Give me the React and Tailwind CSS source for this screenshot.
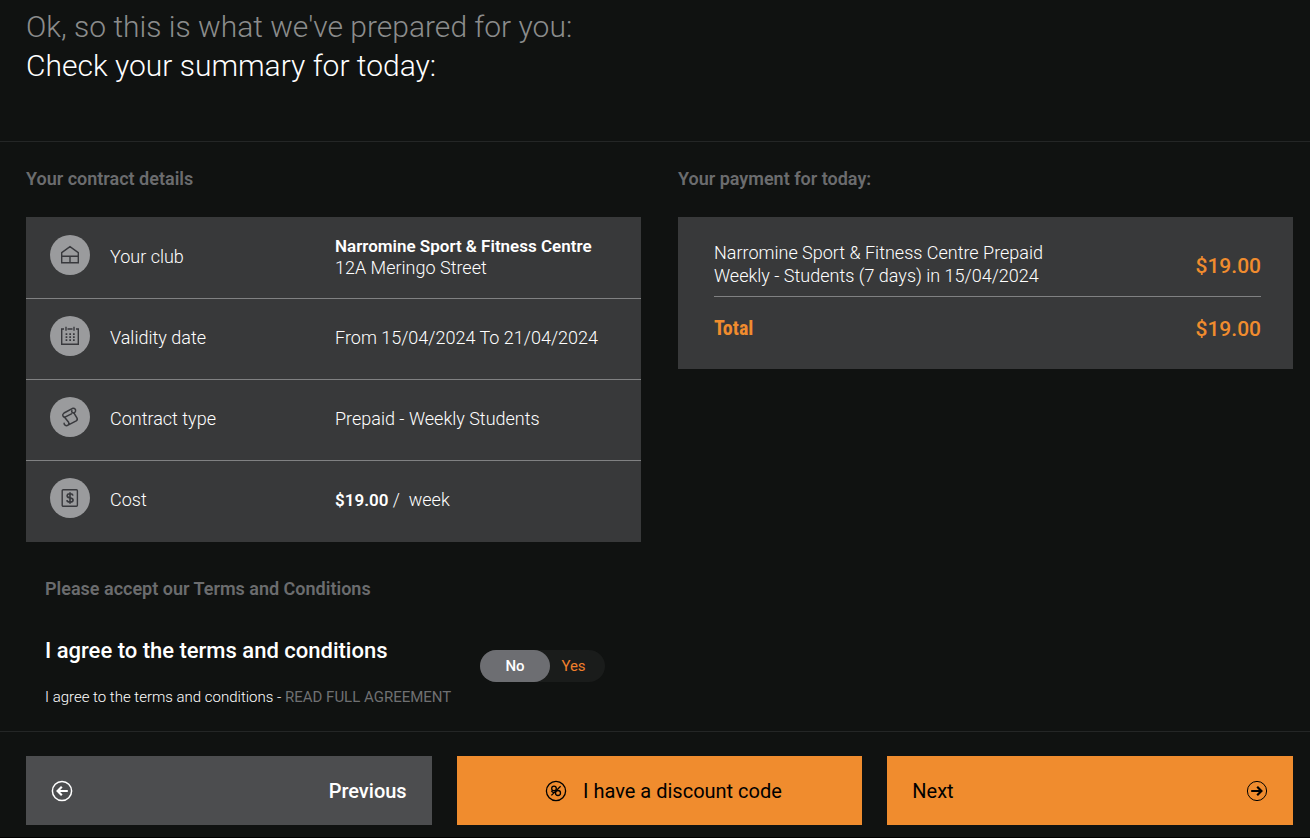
import React, { useState } from "react";

const ClubIcon = () => (
  <svg width="20" height="20" viewBox="0 0 20 20" fill="none" stroke="currentColor" strokeWidth="1.4">
    <path d="M1.7 7.6 10 1.6l8.3 6v10.2H1.7zM1.7 11.2h16.6M10 11.2v6.6" />
  </svg>
);

const DateIcon = () => (
  <svg width="20" height="20" viewBox="0 0 20 20" fill="none" stroke="currentColor" strokeWidth="1.4">
    <path d="M4 3H1.7v15.3h16.6V3H16M7.5 3h5M6 .8v4M14 .8v4" />
    <path d="M5.6 8.2h9.4M5.6 11.2h9.4M5.6 14.2h9.4" strokeWidth="1.7" strokeDasharray="1.7 2" />
  </svg>
);

const ContractIcon = () => (
  <svg width="20" height="20" viewBox="0 0 20 20" fill="none" stroke="currentColor" strokeWidth="1.5" strokeLinecap="round" strokeLinejoin="round">
    <path d="M12.6 1.4 4 6C1.6 7.6 3 10.4 5 10.2l6.4-3.4M12.6 1.4c2.2-.5 3.4 1 2.9 2.8-.5 1.5-2.4 2.2-3.4 1.2-.5-.6-.5-1.2-.2-1.8" />
    <path d="m4.6 10.2 4 5c.7 1.5 0 2.9-1.3 3.3-1.7.5-3.2-.6-3.2-2.2M7.6 18.4l8.6-4.5c1.2-.8 1.4-1.8.7-3l-2.9-4.7" />
  </svg>
);

const CostIcon = () => (
  <svg width="20" height="20" viewBox="0 0 20 20" fill="none" stroke="currentColor" strokeWidth="1.4">
    <rect x="2.2" y="1.7" width="15.2" height="16.6" rx="1" />
    <path d="M12.9 7.6c-.2-1.2-1.3-1.8-2.9-1.8-3.6 0-3.8 3.3-.6 4 1.5.3 3.7.5 3.7 2.2 0 2.8-5.9 2.8-6.2.2M10 4.2v11.6" strokeWidth="1.6" />
  </svg>
);

const ArrowIcon = ({ className, ring = 1.5 }) => (
  <svg className={className} width="22" height="22" viewBox="0 0 22 22" fill="none" stroke="currentColor">
    <circle cx="11" cy="11" r="9.6" strokeWidth={ring} />
    <path d="M5.2 11h10.2M11.2 6.8l4.2 4.2-4.2 4.2" strokeWidth="2.2" />
  </svg>
);

const DiscountIcon = () => (
  <svg width="22" height="22" viewBox="0 0 22 22" fill="none" stroke="currentColor" strokeWidth="1.3">
    <circle cx="11" cy="11" r="9.6" />
    <circle cx="9" cy="8.4" r="2.3" />
    <circle cx="13" cy="13" r="2.5" />
    <path d="M15.6 6.2 6.4 15.4M10.6 12.2c-1.8.9-3.4.2-4.2-1.4" />
  </svg>
);

const details = [
  {
    icon: ClubIcon,
    label: "Your club",
    value: (
      <>
        <strong className="block text-[17px] font-semibold">Narromine Sport &amp; Fitness Centre</strong>
        12A Meringo Street
      </>
    ),
  },
  { icon: DateIcon, label: "Validity date", value: "From 15/04/2024 To 21/04/2024" },
  { icon: ContractIcon, label: "Contract type", value: "Prepaid - Weekly Students" },
  {
    icon: CostIcon,
    label: "Cost",
    value: (
      <>
        <strong className="text-[17px] font-semibold">$19.00</strong> / &nbsp;week
      </>
    ),
  },
];

function SectionTitle({ children }) {
  return <h2 className="text-[18px] leading-6 font-semibold text-[#6b6c6e]">{children}</h2>;
}

function App() {
  const [agreed, setAgreed] = useState(false);

  return (
    <div className="min-h-screen bg-[#101211] font-['Roboto',sans-serif] font-light text-white border-b border-black">
      <header className="border-b border-[#242626] pt-[7px] pb-14 pl-[26px] pr-[17px]">
        <h1 className="text-[30px] leading-[39px]">
          <span className="block text-[#8b8c8c]">Ok, so this is what we've prepared for you:</span>
          Check your summary for today:
        </h1>
      </header>

      <main className="grid grid-cols-2 gap-x-[37px] border-b border-[#242626] pt-[25px] pb-[22px] pl-[26px] pr-[17px]">
        <section>
          <SectionTitle>Your contract details</SectionTitle>
          <dl className="mt-[26px] bg-[#38393a] pt-px text-[18px] leading-[22px]">
            {details.map(({ icon: Icon, label, value }) => (
              <div key={label} className="flex items-center border-b border-[#808182] last:border-transparent pt-[17px] pb-[19px] pl-6 pr-4">
                <span className="flex size-10 shrink-0 items-center justify-center self-start rounded-full bg-[#9a9b9d] text-[#38393d]">
                  <Icon />
                </span>
                <dt className="ml-5 w-[225px] shrink-0">{label}</dt>
                <dd className="flex min-h-11 flex-col justify-center">
                  <div>{value}</div>
                </dd>
              </div>
            ))}
          </dl>

          <div className="mt-[35px] pl-[19px]">
            <SectionTitle>Please accept our Terms and Conditions</SectionTitle>
            <div className="mt-[34px] flex items-start">
              <div className="w-[435px]">
                <h3 className="text-[22px] leading-8 font-medium">I agree to the terms and conditions</h3>
                <p className="mt-[18px] text-[15px] leading-6">
                  I agree to the terms and conditions -{" "}
                  <a href="#agreement" className="font-normal text-[#6f7072]">READ FULL AGREEMENT</a>
                </p>
              </div>
              <div
                role="radiogroup"
                aria-label="Accept the terms and conditions"
                className="mt-[15px] flex h-8 w-[125px] rounded-full bg-[#1a1c1b] text-[15px] leading-8 text-center"
              >
                <label className="relative w-[70px] rounded-full font-medium has-checked:bg-[#6d6e72]">
                  <input type="radio" name="agree" className="absolute inset-0 cursor-pointer appearance-none" checked={!agreed} onChange={() => setAgreed(false)} />
                  No
                </label>
                <label className="relative w-[55px] rounded-full pr-2 font-normal text-[#f07f2c] has-checked:bg-[#6d6e72]">
                  <input type="radio" name="agree" className="absolute inset-0 cursor-pointer appearance-none" checked={agreed} onChange={() => setAgreed(true)} />
                  Yes
                </label>
              </div>
            </div>
          </div>
        </section>

        <section>
          <SectionTitle>Your payment for today:</SectionTitle>
          <div className="mt-[26px] bg-[#38393a] pt-6 pb-7 pl-9 pr-8">
            <table className="w-full text-[18px] leading-[23px]">
              <tbody>
                <tr className="border-b border-[#808182]">
                  <td className="w-[340px] pb-[9px]">Narromine Sport &amp; Fitness Centre Prepaid Weekly - Students (7 days) in 15/04/2024</td>
                  <td className="pb-1 text-right text-[21px] font-medium text-[#f08c2e]">$19.00</td>
                </tr>
                <tr className="text-[#f08c2e]">
                  <th className="pt-5 text-left align-top font-['Roboto_Condensed','Liberation_Sans_Narrow','Roboto',sans-serif] text-[20px] font-bold">Total</th>
                  <td className="pt-[21px] text-right text-[21px] font-medium">$19.00</td>
                </tr>
              </tbody>
            </table>
          </div>
        </section>
      </main>

      <footer className="grid grid-cols-3 gap-[25px] pt-6 pb-3 pl-[26px] pr-[17px] text-[20px]">
        <button className="flex h-[69px] items-center justify-between bg-[#4c4d4f] px-[25px] font-medium">
          <ArrowIcon className="rotate-180" />
          Previous
        </button>
        <button className="flex h-[69px] items-center justify-center gap-4 bg-[#f08c2e] pl-2 font-normal text-black">
          <DiscountIcon />
          I have a discount code
        </button>
        <button className="flex h-[69px] items-center justify-between bg-[#f08c2e] px-[25px] font-normal text-black">
          Next
          <ArrowIcon ring={1} />
        </button>
      </footer>
    </div>
  );
}

export default App;
